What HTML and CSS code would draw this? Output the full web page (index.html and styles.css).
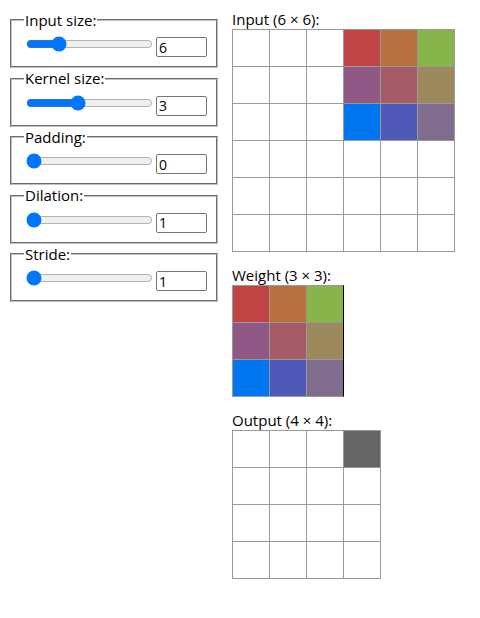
FILE: index.html
```html
<!DOCTYPE html>
<html>
<head>
<meta charset="utf-8">
<link rel="stylesheet" href="styles.css">
</head>
<body>
<div class="app">
  <div class="controls">
    <fieldset class="ctl">
      <legend>Input size:</legend>
      <div class="row">
        <input class="slider" type="range" min="1" max="23" value="6">
        <input class="num" type="number" value="6">
      </div>
    </fieldset>
    <fieldset class="ctl">
      <legend>Kernel size:</legend>
      <div class="row">
        <input class="slider" type="range" min="1" max="6" value="3">
        <input class="num" type="number" value="3">
      </div>
    </fieldset>
    <fieldset class="ctl">
      <legend>Padding:</legend>
      <div class="row">
        <input class="slider" type="range" min="0" max="3" value="0">
        <input class="num" type="number" value="0">
      </div>
    </fieldset>
    <fieldset class="ctl">
      <legend>Dilation:</legend>
      <div class="row">
        <input class="slider" type="range" min="1" max="3" value="1">
        <input class="num" type="number" value="1">
      </div>
    </fieldset>
    <fieldset class="ctl">
      <legend>Stride:</legend>
      <div class="row">
        <input class="slider" type="range" min="1" max="3" value="1">
        <input class="num" type="number" value="1">
      </div>
    </fieldset>
  </div>

  <div class="views">
    <div class="block">
      <div class="label">Input (6 × 6):</div>
      <div class="grid g6">
        <div class="c"></div><div class="c"></div><div class="c"></div><div class="c k1"></div><div class="c k2"></div><div class="c k3"></div>
        <div class="c"></div><div class="c"></div><div class="c"></div><div class="c k4"></div><div class="c k5"></div><div class="c k6"></div>
        <div class="c"></div><div class="c"></div><div class="c"></div><div class="c k7"></div><div class="c k8"></div><div class="c k9"></div>
        <div class="c"></div><div class="c"></div><div class="c"></div><div class="c"></div><div class="c"></div><div class="c"></div>
        <div class="c"></div><div class="c"></div><div class="c"></div><div class="c"></div><div class="c"></div><div class="c"></div>
        <div class="c"></div><div class="c"></div><div class="c"></div><div class="c"></div><div class="c"></div><div class="c"></div>
      </div>
    </div>
    <div class="block">
      <div class="label">Weight (3 × 3):</div>
      <div class="grid g3 weight">
        <div class="c k1"></div><div class="c k2"></div><div class="c k3"></div>
        <div class="c k4"></div><div class="c k5"></div><div class="c k6"></div>
        <div class="c k7"></div><div class="c k8"></div><div class="c k9"></div>
      </div>
    </div>
    <div class="block">
      <div class="label">Output (4 × 4):</div>
      <div class="grid g4">
        <div class="c"></div><div class="c"></div><div class="c"></div><div class="c on"></div>
        <div class="c"></div><div class="c"></div><div class="c"></div><div class="c"></div>
        <div class="c"></div><div class="c"></div><div class="c"></div><div class="c"></div>
        <div class="c"></div><div class="c"></div><div class="c"></div><div class="c"></div>
      </div>
    </div>
  </div>
</div>
</body>
</html>
```

FILE: styles.css
```css
body {
  margin: 8px;
  font-family: "Open Sans", "Noto Sans", "Liberation Sans", sans-serif;
  font-size: 15px;
  color: #000;
  background: #fff;
}
.app {
  display: flex;
  align-items: flex-start;
  gap: 12px;
}
.controls {
  display: flex;
  flex-direction: column;
  width: 212px;
  margin-top: 1.5px;
}
.ctl {
  margin: 0 2px;
  width: 208px;
  box-sizing: border-box;
  padding: 4.5px 9px 9px 12px;
  border: 2px groove rgb(192, 192, 192);
  min-width: 0;
}
.ctl legend {
  padding: 1px 1px;
  line-height: 19px;
  height: 21px;
  box-sizing: border-box;
}
.row {
  display: flex;
  align-items: flex-start;
  gap: 1px;
  height: 22px;
}
.slider {
  width: 127px;
  height: 16px;
  margin: 1px 2px 0 2px;
  accent-color: #0075ff;
}
.num {
  width: 51px;
  height: 20px;
  box-sizing: border-box;
  margin: 2px 0 0 0;
  padding: 1px 2px;
  border: 1px solid #767676;
  border-radius: 2px;
  font-family: inherit;
  font-size: 14px;
  color: #000;
  background: #fff;
}
.views {
  display: flex;
  flex-direction: column;
  gap: 12px;
}
.label {
  height: 21px;
  box-sizing: border-box;
  padding-top: 2px;
  line-height: 19px;
}
.grid {
  display: grid;
  gap: 1px;
  background: #999;
  border: 1px solid #999;
  width: max-content;
}
.g6 { grid-template-columns: repeat(6, 36px); grid-auto-rows: 36px; }
.g4 { grid-template-columns: repeat(4, 36px); grid-auto-rows: 36px; }
.g3 { grid-template-columns: repeat(3, 36px); grid-auto-rows: 36px; }
.weight { border-right-color: #000; }
.c { background: #fff; }
.k1 { background: rgb(192, 68, 68); }
.k2 { background: rgb(184, 112, 64); }
.k3 { background: rgb(136, 180, 76); }
.k4 { background: rgb(144, 88, 132); }
.k5 { background: rgb(164, 92, 104); }
.k6 { background: rgb(156, 138, 92); }
.k7 { background: rgb(0, 119, 240); }
.k8 { background: rgb(80, 88, 184); }
.k9 { background: rgb(128, 108, 140); }
.c.on { background: #666; }
```
